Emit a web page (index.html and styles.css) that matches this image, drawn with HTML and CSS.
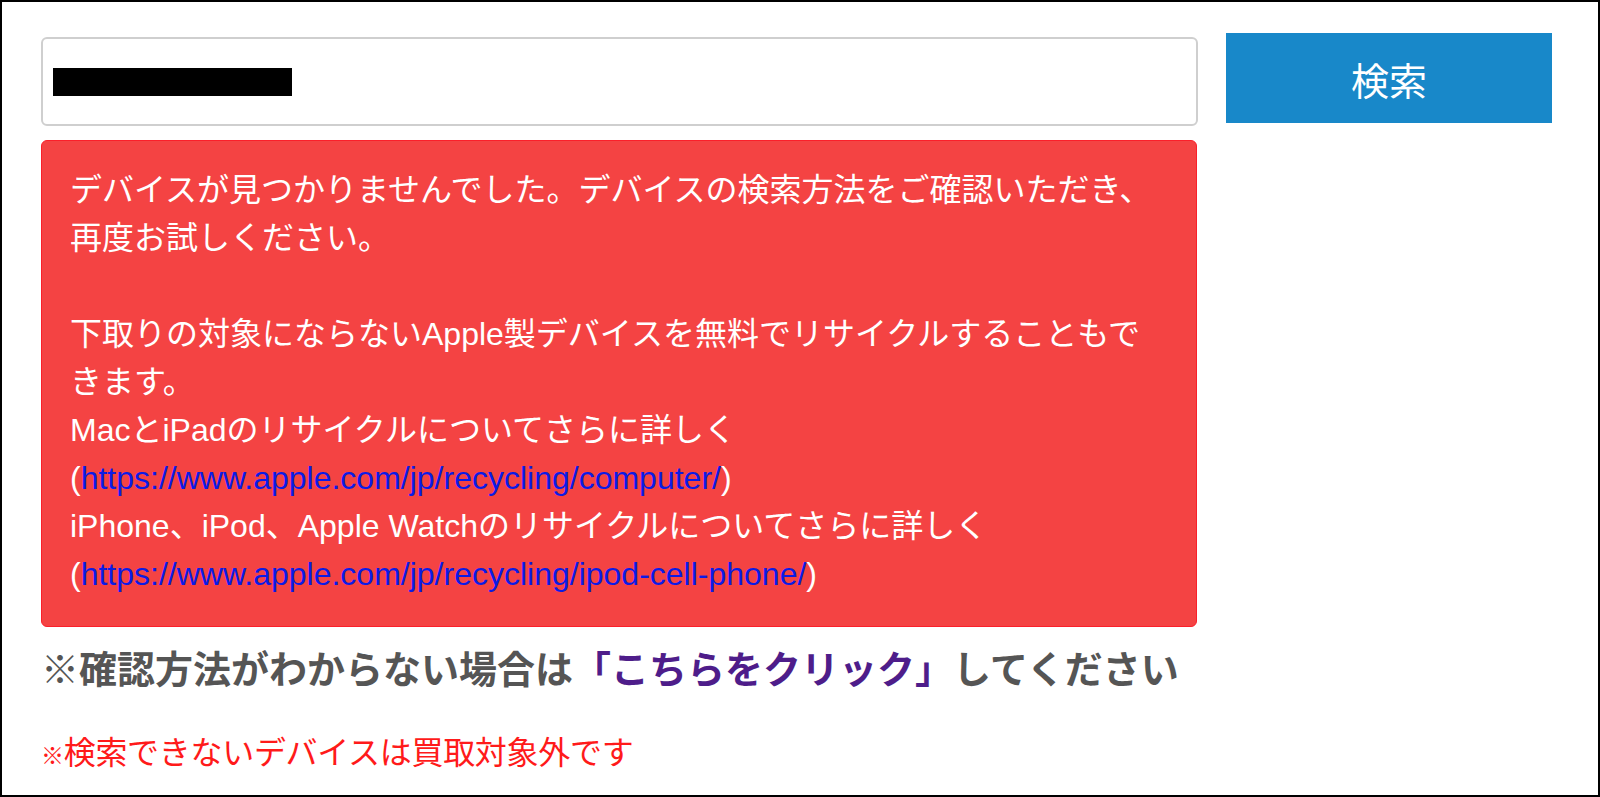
FILE: index.html
```html
<!DOCTYPE html>
<html lang="ja">
<head>
<meta charset="utf-8">
<title>検索</title>
<link rel="stylesheet" href="styles.css">
</head>
<body>
<div class="frame">
  <div class="search-row">
    <div class="main-col">
      <div class="search-input"><span class="redacted"></span></div>
      <div class="alert">
        <p>デバイスが見つかりませんでした。デバイスの検索方法をご確認いただき、再度お試しください。</p>
        <p class="blank">&nbsp;</p>
        <p>下取りの対象にならないApple製デバイスを無料でリサイクルすることもできます。<br>MacとiPadのリサイクルについてさらに詳しく<br>(<a href="#">https://www.apple.com/jp/recycling/computer/</a>)<br>iPhone、iPod、Apple Watchのリサイクルについてさらに詳しく<br>(<a href="#">https://www.apple.com/jp/recycling/ipod-cell-phone/</a>)</p>
      </div>
      <p class="howto">※確認方法がわからない場合は<a class="howto-link" href="#">「こちらをクリック」</a>してください</p>
      <p class="note"><span class="note-mark">※</span>検索できないデバイスは買取対象外です</p>
    </div>
    <button class="search-btn" type="button">検索</button>
  </div>
</div>
</body>
</html>
```

FILE: styles.css
```css
html, body {
  margin: 0;
  padding: 0;
  background: #fff;
}

body {
  font-family: "Liberation Sans", "Noto Sans CJK JP", sans-serif;
}

.frame {
  box-sizing: border-box;
  width: 1600px;
  height: 797px;
  border: 2px solid #000;
  padding: 31px 0 0 39px;
  overflow: hidden;
}

.search-row {
  display: flex;
  align-items: flex-start;
  gap: 28px;
}

.main-col {
  width: 1157px;
  display: flex;
  flex-direction: column;
}

.search-input {
  box-sizing: border-box;
  margin-top: 4px;
  height: 89px;
  border: 2px solid #cfcfcf;
  border-radius: 6px;
  padding: 29px 0 0 10px;
}

.redacted {
  display: block;
  width: 239px;
  height: 28px;
  background: #000;
}

.alert {
  box-sizing: border-box;
  width: 1156px;
  margin-top: 14px;
  background: #f44343;
  border: 1px solid #fb1f2a;
  border-radius: 6px;
  padding: 25px 32px 28px 28px;
  color: #fff;
  font-size: 32px;
  line-height: 48px;
}

.alert p {
  margin: 0;
}

.alert a {
  color: #0b1be6;
  text-decoration: none;
}

.howto {
  margin: 19px 0 0 0;
  font-size: 38px;
  line-height: 48px;
  font-weight: 700;
  color: #555;
  white-space: nowrap;
}

.howto-link {
  color: #4e1d8a;
  text-decoration: none;
}

.note {
  margin: 35px 0 0 0;
  font-size: 32px;
  line-height: 48px;
  color: #ff1a1a;
  letter-spacing: -0.3px;
}

.note-mark {
  font-size: 23px;
}

.search-btn {
  box-sizing: border-box;
  width: 326px;
  height: 90px;
  border: none;
  border-radius: 0;
  background: #1888c9;
  color: #fff;
  font-family: "Noto Sans CJK JP", sans-serif;
  font-size: 38px;
  font-weight: 400;
  padding: 0;
  cursor: pointer;
}
```
